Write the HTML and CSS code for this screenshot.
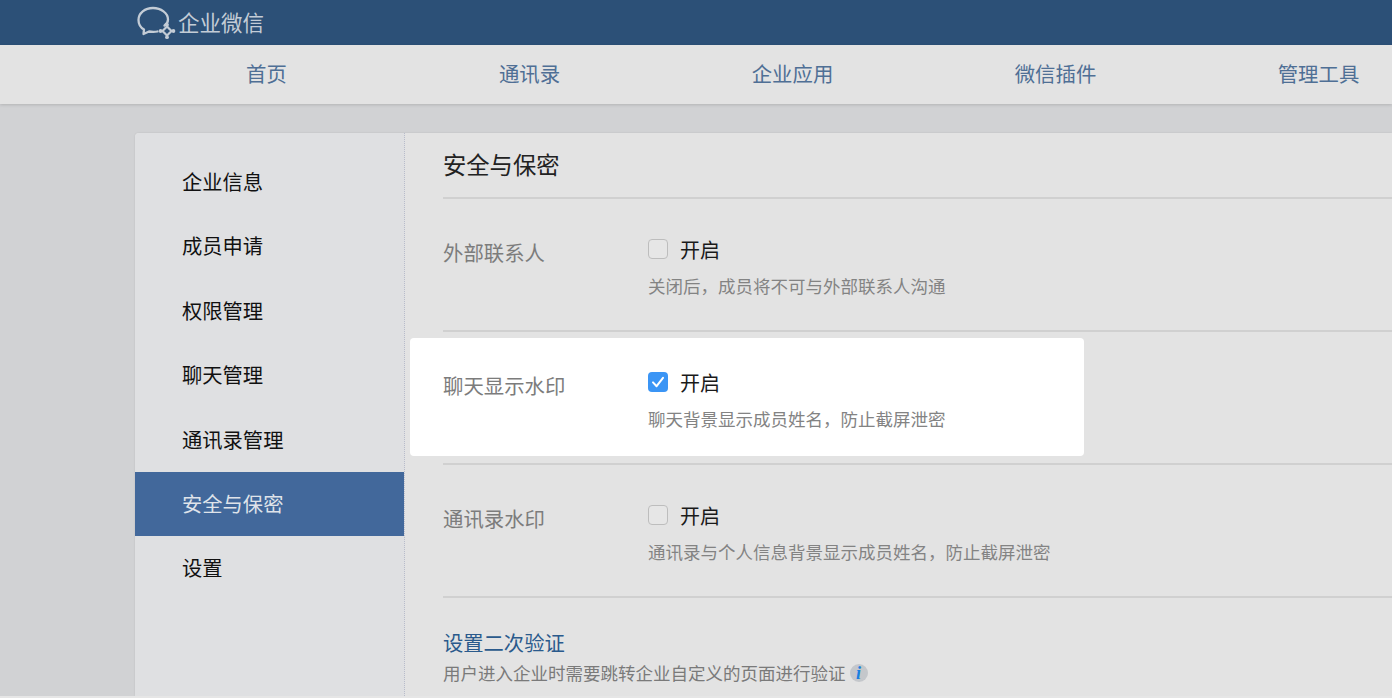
FILE: index.html
```html
<!DOCTYPE html>
<html lang="zh">
<head>
<meta charset="utf-8">
<title>企业微信</title>
<link rel="stylesheet" href="styles.css">
</head>
<body>
<div class="page">
  <header class="topbar">
    <div class="brand">
      <svg class="logo" width="40" height="34" viewBox="0 0 40 34" fill="none">
        <path d="M27.5 19.5C29.8 18 31 16 31 13.5C31 7 24 2 16 2C8 2 1.5 7 1.5 14C1.5 18 3.5 21.5 7 23.5L6.5 28L12 25.5C14.5 26 17.5 26.2 20.5 25.5" stroke="#c3ccd6" stroke-width="2.3" stroke-linecap="round" stroke-linejoin="round"/>
        <path d="M25.5 25L30 20.5L34.5 25L30 29.5Z" stroke="#c3ccd6" stroke-width="2.2" stroke-linejoin="round"/>
        <circle cx="23.6" cy="25" r="1.9" fill="#c3ccd6"/>
        <circle cx="36.4" cy="25" r="1.9" fill="#c3ccd6"/>
        <circle cx="30" cy="18.8" r="1.9" fill="#c3ccd6"/>
        <circle cx="30" cy="31.2" r="1.9" fill="#c3ccd6"/>
      </svg>
      <span class="brand-name">企业微信</span>
    </div>
  </header>
  <nav class="mainnav">
    <a class="nav-item">首页</a>
    <a class="nav-item">通讯录</a>
    <a class="nav-item">企业应用</a>
    <a class="nav-item">微信插件</a>
    <a class="nav-item">管理工具</a>
  </nav>
  <main class="card">
    <aside class="sidebar">
      <a class="side-item">企业信息</a>
      <a class="side-item">成员申请</a>
      <a class="side-item">权限管理</a>
      <a class="side-item">聊天管理</a>
      <a class="side-item">通讯录管理</a>
      <a class="side-item active">安全与保密</a>
      <a class="side-item">设置</a>
    </aside>
    <section class="content">
      <h1 class="title">安全与保密</h1>
      <div class="row">
        <div class="label">外部联系人</div>
        <div class="field">
          <label class="check"><span class="box"></span><span>开启</span></label>
          <p class="desc">关闭后&#xFF0C;成员将不可与外部联系人沟通</p>
        </div>
      </div>
      <div class="row highlighted">
        <div class="label">聊天显示水印</div>
        <div class="field">
          <label class="check"><span class="box on"><svg width="20" height="20" viewBox="0 0 20 20" fill="none"><path d="M5 10.4L8.6 14.2L15 5.8" stroke="#fff" stroke-width="2" stroke-linecap="round" stroke-linejoin="round"/></svg></span><span>开启</span></label>
          <p class="desc">聊天背景显示成员姓名&#xFF0C;防止截屏泄密</p>
        </div>
      </div>
      <div class="row">
        <div class="label">通讯录水印</div>
        <div class="field">
          <label class="check"><span class="box"></span><span>开启</span></label>
          <p class="desc">通讯录与个人信息背景显示成员姓名&#xFF0C;防止截屏泄密</p>
        </div>
      </div>
      <div class="verify">
        <a class="verify-title">设置二次验证</a>
        <p class="verify-desc">用户进入企业时需要跳转企业自定义的页面进行验证<span class="info">i</span></p>
      </div>
    </section>
  </main>
</div>
</body>
</html>
```
FILE: styles.css
```css
* { box-sizing: border-box; }
html, body { margin: 0; padding: 0; height: 100%; overflow: hidden; }
body {
  font-family: "Noto Sans CJK SC", "Liberation Sans", sans-serif;
  background: #e6e6e6;
}
.page {
  height: 696px;
  background: #d1d2d4;
  display: flex;
  flex-direction: column;
  overflow: hidden;
}
.topbar {
  height: 45px;
  flex: none;
  background: #2c5077;
  padding-left: 137px;
}
.brand { display: flex; align-items: center; height: 45px; }
.logo { flex: none; display: block; margin: 1px 1px 0 0; }
.brand-name { color: #c3ccd6; font-size: 21.5px; line-height: 45px; margin-top: -2px; }
.mainnav {
  height: 59px;
  flex: none;
  background: #e3e3e3;
  display: flex;
  padding-left: 135px;
  box-shadow: 0 1px 3px rgba(0,0,0,.15);
}
.nav-item {
  width: 263px;
  flex: none;
  text-align: center;
  color: #4f6f95;
  font-size: 20.4px;
  line-height: 57px;
}
.card {
  margin: 29px 0 0 135px;
  flex: 1;
  display: flex;
  background: #e3e3e3;
  border-radius: 4px 0 0 0;
  box-shadow: 0 0 2px rgba(0,0,0,.12);
  overflow: hidden;
}
.sidebar {
  width: 270px;
  flex: none;
  background: #dfe0e2;
  border-right: 1px dotted #b8bcca;
  padding-top: 17px;
}
.side-item {
  display: block;
  height: 64.4px;
  line-height: 63.8px;
  padding-left: 47px;
  font-size: 20.3px;
  color: #111;
}
.side-item.active {
  background: #42689b;
  color: #dfe3ea;
}
.content { flex: 1; padding-left: 38px; min-width: 0; }
.title {
  margin: 0;
  height: 66px;
  line-height: 63px;
  font-size: 23.3px;
  font-weight: 400;
  color: #222;
  border-bottom: 2px solid #d0d0d0;
}
.row {
  position: relative;
  height: 133px;
  display: flex;
  padding-top: 30px;
  border-bottom: 2px solid #d0d0d0;
}
.row.highlighted::before {
  content: "";
  position: absolute;
  left: -33px;
  top: 6px;
  width: 674px;
  height: 118px;
  background: #fff;
  border-radius: 4px;
}
.label {
  position: relative;
  width: 205px;
  flex: none;
  font-size: 20.4px;
  line-height: 30px;
  margin-top: 8px;
  color: #7c7c7c;
}
.field { position: relative; }
.check {
  display: flex;
  align-items: center;
  height: 30px;
  margin-top: 5px;
  font-size: 20px;
  color: #1a1a1a;
}
.box {
  width: 20px;
  height: 20px;
  flex: none;
  border: 1.5px solid #bdbdbd;
  border-radius: 4px;
  margin-right: 12px;
  background: #e6e6e6;
}
.box.on { background: #3b95f5; border: 0; }
.box svg { display: block; }
.desc {
  margin: 7px 0 0;
  font-size: 17.5px;
  line-height: 30px;
  color: #838383;
  white-space: nowrap;
}
.verify { padding-top: 28px; }
.verify-title {
  display: block;
  font-size: 20.3px;
  line-height: 32px;
  color: #2a5a8c;
}
.verify-desc {
  margin: 0;
  font-size: 17.5px;
  line-height: 30px;
  color: #7a7a7a;
  white-space: nowrap;
  display: flex;
  align-items: center;
}
.info {
  width: 18px;
  height: 18px;
  margin-left: 4px;
  border-radius: 50%;
  background: #c4c7cb;
  color: #1a7fe0;
  font-family: "Liberation Serif", serif;
  font-style: italic;
  font-weight: 700;
  font-size: 18px;
  line-height: 18px;
  text-align: center;
}
```
